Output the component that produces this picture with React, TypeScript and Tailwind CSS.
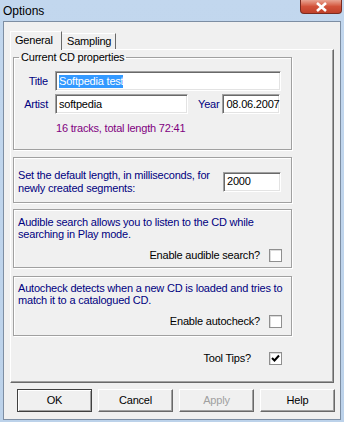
import React from "react";

const font = { fontFamily: '"Liberation Sans", Arial, sans-serif' };

function TextBox({ value, className, selected }: { value: string; className: string; selected?: boolean }) {
  return (
    <div
      className={`h-[20px] bg-white border border-t-[#a0a0a0] border-l-[#a0a0a0] border-b-white border-r-white shadow-[inset_1px_1px_0_#696969,inset_-1px_-1px_0_#e3e3e3] flex items-center pl-[3px] text-black ${className}`}
    >
      {selected ? <span className="bg-[#3399ff] text-white leading-[13px]">{value}</span> : <span>{value}</span>}
    </div>
  );
}

function Check({ checked }: { checked?: boolean }) {
  return (
    <div className="w-[13px] h-[13px] bg-white border border-[#8f8f8f] shadow-[inset_1px_1px_0_#dcdcdc] flex items-center justify-center">
      {checked && (
        <svg width="9" height="9" viewBox="0 0 9 9">
          <path d="M1 4 L3.5 6.5 L8 1.5" stroke="#000" strokeWidth="2" fill="none" />
        </svg>
      )}
    </div>
  );
}

function Box({ children, className }: { children: React.ReactNode; className: string }) {
  return (
    <div
      className={`ml-[2px] w-[279px] border border-[#a0a0a0] shadow-[inset_1px_1px_0_white,1px_1px_0_white] ${className}`}
    >
      {children}
    </div>
  );
}

function Btn({ label, isDefault, disabled }: { label: string; isDefault?: boolean; disabled?: boolean }) {
  return (
    <div
      className={`w-[75px] h-[23px] flex items-center justify-center bg-[#f0f0f0] border ${
        isDefault
          ? "border-[#404040] shadow-[inset_1px_1px_0_white,inset_-1px_-1px_0_#a0a0a0]"
          : "border-t-white border-l-white border-b-[#696969] border-r-[#696969] shadow-[inset_-1px_-1px_0_#a0a0a0]"
      } ${disabled ? "text-[#a0a0a0]" : "text-black"}`}
    >
      {label}
    </div>
  );
}

export default function App() {
  return (
    <div className="w-[344px] h-[422px] bg-gradient-to-b from-[#c2d7ee] to-[#bcd2ea] flex flex-col" style={font}>
      {/* title bar */}
      <div className="h-[21px] flex justify-between items-start">
        <span className="ml-[3px] mt-[2px] text-[12px] text-black">Options</span>
        <div className="mr-[2px] w-[42px] h-[14px] rounded-b-[4px] bg-gradient-to-b from-[#e8a493] via-[#d2523a] to-[#c0412b] border border-[#7a2b20] border-t-0 flex items-center justify-center">
          <svg width="13" height="10" viewBox="0 0 13 10">
            <path d="M2 1 L11 9 M11 1 L2 9" stroke="white" strokeWidth="2.6" />
          </svg>
        </div>
      </div>

      {/* client area */}
      <div className="mx-[3px] h-[399px] bg-[#f0f0f0] border border-[#7d8ea3] flex flex-col text-[11px] tracking-[-0.2px]">
        {/* tabs */}
        <div className="ml-[6px] mt-[9px] flex h-[18px]">
          <div className="relative z-10 w-[52px] h-[19px] bg-[#f0f0f0] border-t border-l border-white border-r border-r-[#696969] pl-[4px] pt-[2px] text-black leading-[13px]">
            General
          </div>
          <div className="self-end w-[54px] h-[16px] border-t border-white border-r border-r-[#696969] pl-[5px] pt-[1px] text-black leading-[13px]">
            Sampling
          </div>
        </div>

        <div className="ml-[6px] w-[324px] h-[334px] border border-t-white border-l-white border-b-[#696969] border-r-[#696969] shadow-[inset_-1px_-1px_0_#a0a0a0] flex flex-col">
          {/* Current CD properties */}
          <fieldset className="ml-[2px] mt-[1px] w-[279px] h-[99px] border border-[#a0a0a0] shadow-[inset_1px_1px_0_white,1px_1px_0_white] p-0">
            <legend className="ml-[5px] px-[2px] text-black leading-[13px]">Current CD properties</legend>
            <div className="flex items-center mt-[7px]">
              <span className="w-[34px] text-right text-[#000080]">Title</span>
              <TextBox value="Softpedia test" selected className="ml-[7px] w-[226px]" />
            </div>
            <div className="flex items-center mt-[3px]">
              <span className="w-[34px] text-right text-[#000080]">Artist</span>
              <TextBox value="softpedia" className="ml-[7px] w-[133px]" />
              <span className="ml-[10px] text-[#000080]">Year</span>
              <TextBox value="08.06.2007" className="ml-[3px] w-[58px] pl-[2px]" />
            </div>
            <div className="ml-[42px] mt-[8px] leading-[13px] text-[#800080]">16 tracks, total length 72:41</div>
          </fieldset>

          <Box className="mt-[7px] h-[46px] flex items-center pt-[3px]">
            <div className="ml-[4px] w-[205px] leading-[13px] text-[#000080]">
              Set the default length, in milliseconds, for newly created segments:
            </div>
            <TextBox value="2000" className="w-[58px] pl-[2px]" />
          </Box>

          <Box className="mt-[6px] h-[59px] flex flex-col">
            <div className="ml-[4px] mt-[6px] leading-[12px] text-[#000080]">
              Audible search allows you to listen to the CD while searching in Play mode.
            </div>
            <div className="flex justify-end items-center mr-[9px] mt-[7px] gap-[9px]">
              <span className="text-black">Enable audible search?</span>
              <Check />
            </div>
          </Box>

          <Box className="mt-[8px] h-[60px] flex flex-col">
            <div className="ml-[4px] mt-[5px] leading-[12px] text-[#000080]">
              Autocheck detects when a new CD is loaded and tries to match it to a catalogued CD.
            </div>
            <div className="flex justify-end items-center mr-[9px] mt-[7px] gap-[9px]">
              <span className="text-black">Enable autocheck?</span>
              <Check />
            </div>
          </Box>

          <div className="ml-[2px] w-[279px] flex justify-end items-center mt-[14px] pr-[10px] gap-[18px]">
            <span className="text-black">Tool Tips?</span>
            <Check checked />
          </div>
        </div>

        {/* buttons */}
        <div className="ml-[13px] mt-[6px] flex gap-[6px]">
          <Btn label="OK" isDefault />
          <Btn label="Cancel" />
          <Btn label="Apply" disabled />
          <Btn label="Help" />
        </div>
      </div>
    </div>
  );
}
